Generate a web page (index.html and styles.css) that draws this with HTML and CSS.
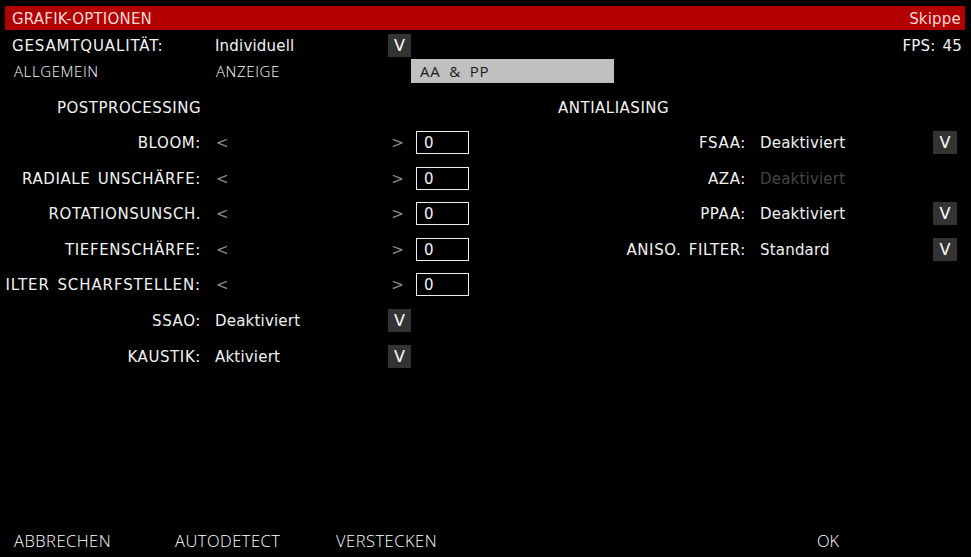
FILE: index.html
```html
<!DOCTYPE html>
<html lang="de">
<head>
<meta charset="utf-8">
<title>Grafik-Optionen</title>
<link rel="stylesheet" href="styles.css">
</head>
<body>
<div class="screen">
  <header class="titlebar">
    <span class="title">GRAFIK-OPTIONEN</span>
    <span class="skip">Skippe</span>
  </header>

  <div class="quality-row">
    <span class="quality-label">GESAMTQUALITÄT:</span>
    <span class="quality-value">Individuell</span>
    <span class="dd-btn">V</span>
    <span class="fps">FPS: 45</span>
  </div>

  <nav class="tabs">
    <span class="tab tab-first">ALLGEMEIN</span>
    <span class="tab">ANZEIGE</span>
    <span class="tab tab-active">AA &amp; PP</span>
  </nav>

  <div class="panels">
    <section class="panel panel-left">
      <h2 class="heading heading-left">POSTPROCESSING</h2>
      <div class="rows rows-left">
        <div class="label"><span>BLOOM:</span></div>
        <div class="slider"><span class="arrow">&lt;</span><span class="arrow arrow-right">&gt;</span><span class="num-box">0</span></div>

        <div class="label"><span>RADIALE UNSCHÄRFE:</span></div>
        <div class="slider"><span class="arrow">&lt;</span><span class="arrow arrow-right">&gt;</span><span class="num-box">0</span></div>

        <div class="label"><span>ROTATIONSUNSCH.</span></div>
        <div class="slider"><span class="arrow">&lt;</span><span class="arrow arrow-right">&gt;</span><span class="num-box">0</span></div>

        <div class="label"><span>TIEFENSCHÄRFE:</span></div>
        <div class="slider"><span class="arrow">&lt;</span><span class="arrow arrow-right">&gt;</span><span class="num-box">0</span></div>

        <div class="label label-overflow"><span>FILTER SCHARFSTELLEN:</span></div>
        <div class="slider"><span class="arrow">&lt;</span><span class="arrow arrow-right">&gt;</span><span class="num-box">0</span></div>

        <div class="label"><span>SSAO:</span></div>
        <div class="select"><span class="select-value">Deaktiviert</span><span class="dd-btn">V</span></div>

        <div class="label"><span>KAUSTIK:</span></div>
        <div class="select"><span class="select-value">Aktiviert</span><span class="dd-btn">V</span></div>
      </div>
    </section>

    <section class="panel panel-right">
      <h2 class="heading heading-right">ANTIALIASING</h2>
      <div class="rows rows-right">
        <div class="label"><span>FSAA:</span></div>
        <div class="select select-wide"><span class="select-value">Deaktiviert</span><span class="dd-btn">V</span></div>

        <div class="label"><span>AZA:</span></div>
        <div class="select select-wide"><span class="select-value disabled">Deaktiviert</span></div>

        <div class="label"><span>PPAA:</span></div>
        <div class="select select-wide"><span class="select-value">Deaktiviert</span><span class="dd-btn">V</span></div>

        <div class="label"><span>ANISO. FILTER:</span></div>
        <div class="select select-wide"><span class="select-value">Standard</span><span class="dd-btn">V</span></div>
      </div>
    </section>
  </div>

  <footer class="actions">
    <span class="action">ABBRECHEN</span>
    <span class="action">AUTODETECT</span>
    <span class="action">VERSTECKEN</span>
    <span class="action action-ok">OK</span>
  </footer>
</div>
</body>
</html>
```

FILE: styles.css
```css
html, body {
  margin: 0;
  padding: 0;
  background: #000;
}

body {
  width: 971px;
  height: 557px;
  overflow: hidden;
  font-family: "DejaVu Sans", "Liberation Sans", sans-serif;
  font-size: 15px;
  color: #f2f2f2;
  letter-spacing: 0.2px;
}

.screen {
  display: flex;
  flex-direction: column;
  height: 557px;
}

.titlebar {
  display: flex;
  justify-content: space-between;
  align-items: center;
  height: 23px;
  margin: 6px 6px 0 5px;
  padding: 1px 4px 0 7px;
  background: #b30000;
  color: #f6dada;
}

.quality-row {
  display: flex;
  align-items: center;
  height: 23px;
  margin-top: 4px;
  padding: 0 9px 0 12px;
}

.quality-label {
  width: 203px;
  letter-spacing: 0.85px;
}

.quality-value {
  width: 173px;
}

.fps {
  margin-left: auto;
  word-spacing: 2px;
}

.dd-btn {
  display: flex;
  align-items: center;
  justify-content: center;
  width: 23px;
  height: 23px;
  background: #333;
  color: #fff;
  font-size: 16px;
  letter-spacing: 0;
  flex: none;
}

.tabs {
  display: grid;
  grid-template-columns: 201px 200px 203px;
  height: 24px;
  margin-top: 2px;
  padding-left: 10px;
  font-family: "Open Sans", "DejaVu Sans", sans-serif;
  font-weight: 300;
  font-size: 15px;
  letter-spacing: 0.6px;
  color: #fff;
}

.tab {
  display: flex;
  align-items: center;
  padding-left: 5px;
}

.tab-first {
  padding-left: 4px;
}

.tab-active {
  background: #c0c0c0;
  color: #1a1a1a;
  font-weight: 400;
  padding-left: 9px;
  word-spacing: 4px;
  letter-spacing: 0.8px;
}

.panels {
  display: grid;
  grid-template-columns: 480px 491px;
}

.heading {
  margin: 13px 0 0;
  height: 24px;
  display: flex;
  align-items: center;
  font-size: 15px;
  font-weight: normal;
  letter-spacing: 0.5px;
}

.heading-left {
  padding-left: 57px;
}

.heading-right {
  padding-left: 78px;
}

.rows {
  display: grid;
  grid-auto-rows: 23px;
  row-gap: 12.6px;
  margin-top: 11px;
}

.rows-left {
  grid-template-columns: 196px 268px;
  padding-left: 5px;
}

.rows-right {
  grid-template-columns: 266px 211px;
}

.label {
  display: flex;
  justify-content: flex-end;
  align-items: center;
  overflow: hidden;
  white-space: nowrap;
  letter-spacing: 0.6px;
  word-spacing: 2px;
  padding-top: 1px;
}

.label-overflow {
  letter-spacing: 0.9px;
}

.label span {
  flex: none;
}

.slider {
  display: flex;
  align-items: center;
}

.arrow {
  color: #8a8a8a;
  padding-left: 15px;
  padding-top: 1px;
}

.arrow-right {
  margin-left: auto;
  padding-left: 0;
}

.num-box {
  box-sizing: border-box;
  width: 53px;
  height: 23px;
  margin-left: 12px;
  padding-left: 7px;
  padding-top: 1px;
  border: 1px solid #eee;
  display: flex;
  align-items: center;
}

.select {
  display: flex;
  align-items: center;
  padding-left: 14px;
}

.select-value {
  width: 173px;
  padding-top: 1px;
}

.select-wide .dd-btn {
  width: 24px;
}

.disabled {
  color: #444;
}

.actions {
  display: flex;
  align-items: center;
  height: 24px;
  margin-top: auto;
  margin-bottom: 5px;
  padding: 0 14px;
  font-family: "Open Sans", "DejaVu Sans", sans-serif;
  font-weight: 300;
  font-size: 16.5px;
  letter-spacing: 0.5px;
  color: #fff;
}

.action {
  width: 161px;
}

.action-ok {
  width: 140px;
  margin-left: auto;
  letter-spacing: 0;
}
```
